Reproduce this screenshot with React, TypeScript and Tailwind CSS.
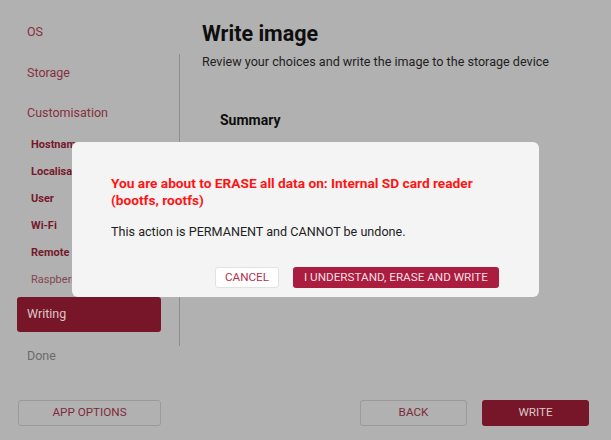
import React from "react";

const steps = [
  { label: "OS", top: "mt-[15px]" },
  { label: "Storage", top: "mt-[7px]" },
  { label: "Customisation", top: "mt-[6px]" },
];

const subSteps = ["Hostname", "Localisation", "User", "Wi-Fi", "Remote access"];

export default function App() {
  return (
    <div
      className="relative w-[611px] h-[440px] overflow-hidden bg-[#b1b1b1] flex flex-col"
      style={{ fontFamily: "Roboto, 'Liberation Sans', sans-serif" }}
    >
      <div className="flex flex-1 min-h-0">
        {/* sidebar */}
        <div className="w-[179px] shrink-0 pl-[17px] pr-[18px] flex flex-col">
          {steps.map((s) => (
            <div key={s.label} className={`${s.top} h-[34px] flex items-center pl-[10px] text-[12.5px] text-[#87303f]`}>
              {s.label}
            </div>
          ))}
          <div className="h-[2px]" />
          {subSteps.map((s) => (
            <div key={s} className="h-[27px] flex items-center pl-[14px] text-[11px] font-bold text-[#751a2c] whitespace-nowrap">
              {s}
            </div>
          ))}
          <div className="h-[27px] flex items-center pl-[14px] text-[11px] text-[#854552] whitespace-nowrap">Raspberry Pi Connect</div>
          <div className="mt-[3px] h-[35px] rounded-[3px] bg-[#781629] flex items-center pl-[10px] text-[12.5px] text-[#d9c6ca]">
            Writing
          </div>
          <div className="mt-[7px] h-[34px] flex items-center pl-[10px] text-[12.5px] text-[#6b6b6b]">Done</div>
        </div>

        {/* content */}
        <div className="flex-1 flex flex-col">
          <div className="pl-[23px] pt-[20px] h-[54px]">
            <h1 className="text-[21.5px] leading-[27px] font-bold text-[#0e0e0e]">Write image</h1>
          </div>
          <div className="flex-1 border-l border-[#8e8e8e] mb-[54px] pl-[22px]">
            <p className="text-[12.6px] leading-[16px] text-[#1f1f1f]">
              Review your choices and write the image to the storage device
            </p>
            <p className="mt-[41px] ml-[18px] text-[14px] leading-[18px] font-bold text-[#0e0e0e]">Summary</p>
          </div>
        </div>
      </div>

      {/* bottom bar */}
      <div className="h-[40px] shrink-0 flex items-start px-[18px] pb-[14px]">
        <button className="w-[143px] h-[26px] rounded-[3px] border border-[#9a9a9a] text-[11.7px] text-[#7e2a3a]">
          APP OPTIONS
        </button>
        <div className="flex-1" />
        <button className="w-[107px] h-[26px] rounded-[3px] border border-[#9a9a9a] text-[11.7px] text-[#7e2a3a]">
          BACK
        </button>
        <button className="ml-[15px] mr-[4px] w-[107px] h-[26px] rounded-[3px] bg-[#781629] text-[11.7px] text-[#d9c6ca]">
          WRITE
        </button>
      </div>

      {/* dialog */}
      <div className="absolute left-[72px] top-[142px] w-[467px] h-[155px] rounded-[6px] bg-[#f4f4f4] pl-[39px] pr-[40px] pt-[33px] flex flex-col">
        <p className="text-[13.7px] leading-[17px] font-bold text-[#ff1414]">
          You are about to ERASE all data on: Internal SD card reader (bootfs, rootfs)
        </p>
        <p className="mt-[15px] text-[12.6px] leading-[16px] text-[#1e1e1e]">
          This action is PERMANENT and CANNOT be undone.
        </p>
        <div className="mt-[27px] flex justify-end gap-[14px]">
          <button className="w-[64px] h-[21px] rounded-[3px] bg-white border border-[#e2e2e2] text-[11.7px] text-[#b52f4c]">
            CANCEL
          </button>
          <button className="w-[206px] h-[21px] rounded-[3px] bg-[#ab1d3e] text-[11.7px] text-[#f3dfe4]">
            I UNDERSTAND, ERASE AND WRITE
          </button>
        </div>
      </div>
    </div>
  );
}
